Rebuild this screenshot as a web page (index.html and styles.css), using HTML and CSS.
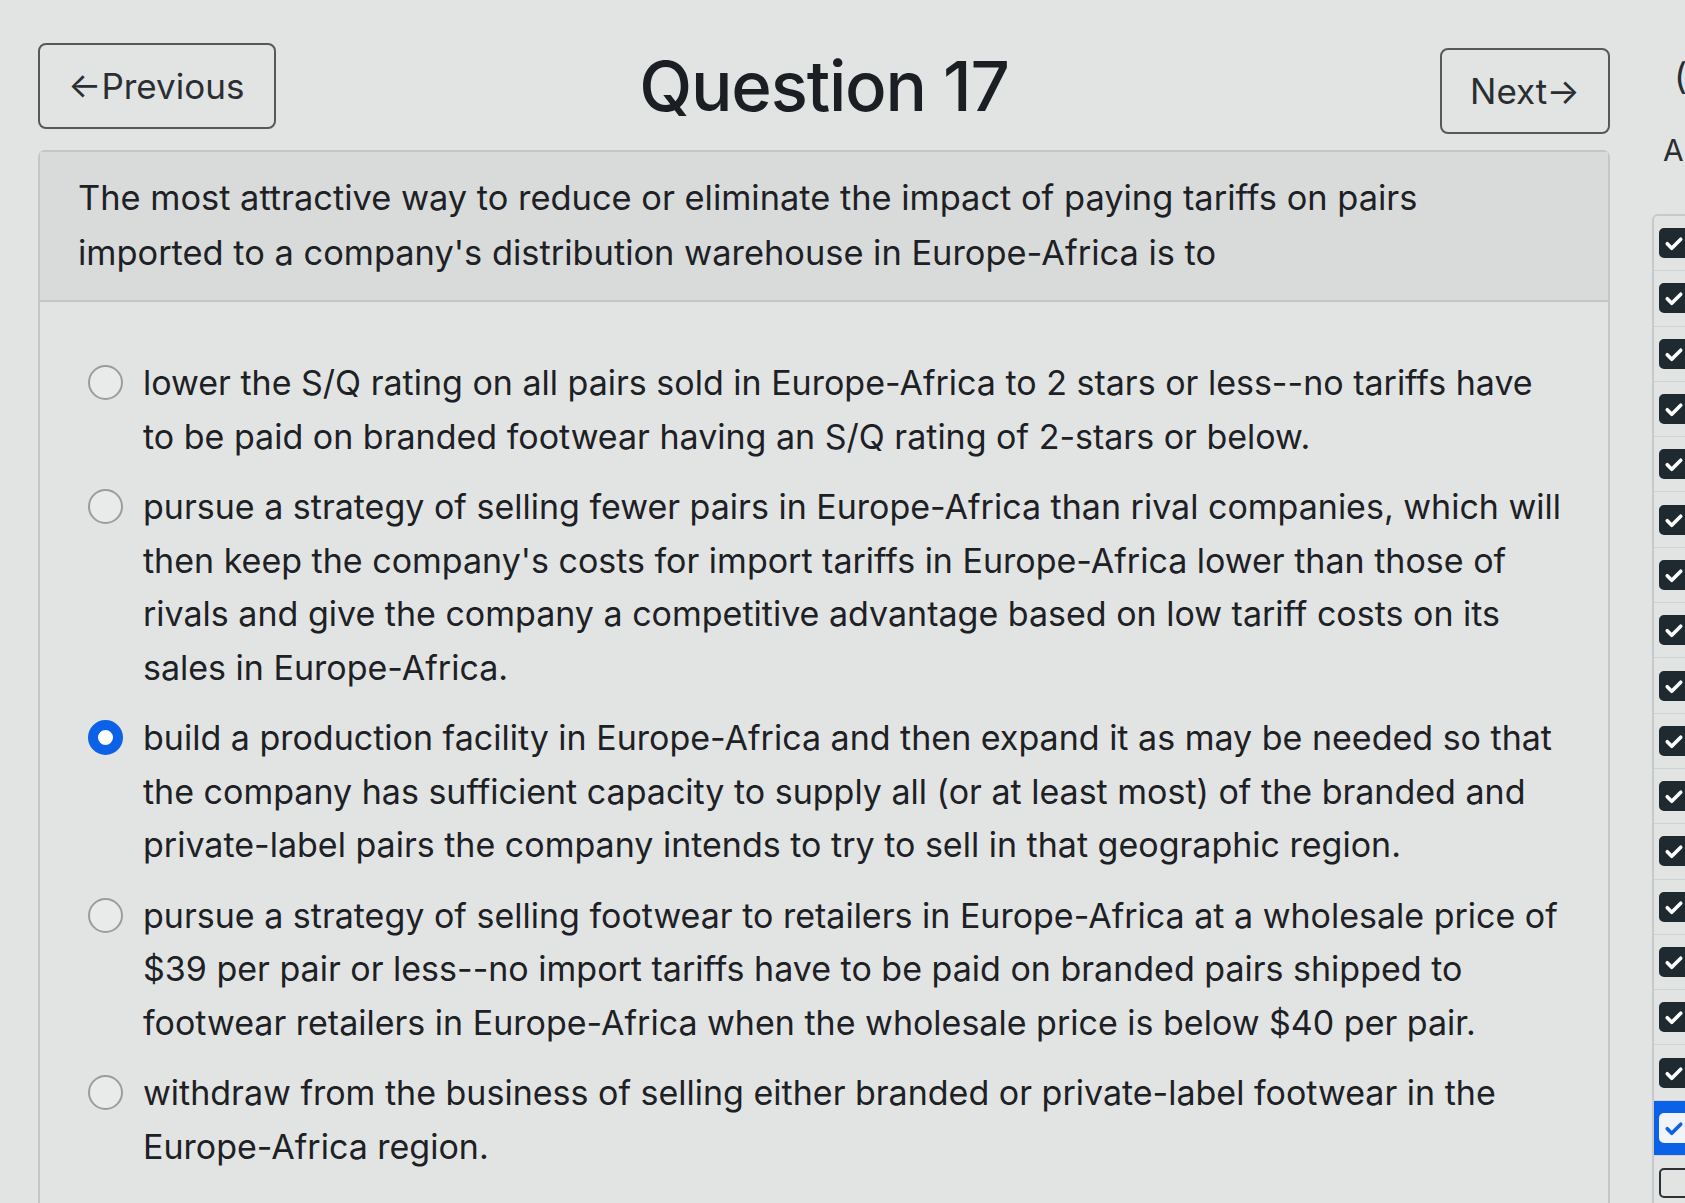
FILE: index.html
```html
<!DOCTYPE html>
<html>
  <head>
    <title>Question 17</title>
    <link rel="stylesheet" href="styles.css">
  </head>
  <body>
    <div class="page">
      <main class="main">
        <div class="topbar">
          <button class="nav-btn prev">&larr;Previous</button>
          <h1 class="title">Question 17</h1>
          <button class="nav-btn next">Next&rarr;</button>
        </div>

        <div class="card">
          <div class="card-header">
            The most attractive way to reduce or eliminate the impact of paying tariffs on pairs
            imported to a company's distribution warehouse in Europe-Africa is to
          </div>
          <div class="card-body">
            <label class="option">
              <input type="radio" name="q17" />
              <span>lower the S/Q rating on all pairs sold in Europe-Africa to 2 stars or less--no tariffs have to be paid on branded footwear having an S/Q rating of 2-stars or below.</span>
            </label>
            <label class="option">
              <input type="radio" name="q17" />
              <span>pursue a strategy of selling fewer pairs in Europe-Africa than rival companies, which will then keep the company's costs for import tariffs in Europe-Africa lower than those of rivals and give the company a competitive advantage based on low tariff costs on its sales in Europe-Africa.</span>
            </label>
            <label class="option">
              <input type="radio" name="q17" checked />
              <span>build a production facility in Europe-Africa and then expand it as may be needed so that the company has sufficient capacity to supply all (or at least most) of the branded and private-label pairs the company intends to try to sell in that geographic region.</span>
            </label>
            <label class="option">
              <input type="radio" name="q17" />
              <span>pursue a strategy of selling footwear to retailers in Europe-Africa at a wholesale price of $39 per pair or less--no import tariffs have to be paid on branded pairs shipped to footwear retailers in Europe-Africa when the wholesale price is below $40 per pair.</span>
            </label>
            <label class="option">
              <input type="radio" name="q17" />
              <span>withdraw from the business of selling either branded or private-label footwear in the Europe-Africa region.</span>
            </label>
          </div>
        </div>
      </main>

      <aside class="sidebar">
        <div class="side-title">(17/18)</div>
        <div class="side-label">Answered</div>
        <ul class="qlist">
          <li><span class="box done"><svg viewBox="0 0 16 16"><path d="M3.5 8.5l3 3 6-6" /></svg></span></li>
          <li><span class="box done"><svg viewBox="0 0 16 16"><path d="M3.5 8.5l3 3 6-6" /></svg></span></li>
          <li><span class="box done"><svg viewBox="0 0 16 16"><path d="M3.5 8.5l3 3 6-6" /></svg></span></li>
          <li><span class="box done"><svg viewBox="0 0 16 16"><path d="M3.5 8.5l3 3 6-6" /></svg></span></li>
          <li><span class="box done"><svg viewBox="0 0 16 16"><path d="M3.5 8.5l3 3 6-6" /></svg></span></li>
          <li><span class="box done"><svg viewBox="0 0 16 16"><path d="M3.5 8.5l3 3 6-6" /></svg></span></li>
          <li><span class="box done"><svg viewBox="0 0 16 16"><path d="M3.5 8.5l3 3 6-6" /></svg></span></li>
          <li><span class="box done"><svg viewBox="0 0 16 16"><path d="M3.5 8.5l3 3 6-6" /></svg></span></li>
          <li><span class="box done"><svg viewBox="0 0 16 16"><path d="M3.5 8.5l3 3 6-6" /></svg></span></li>
          <li><span class="box done"><svg viewBox="0 0 16 16"><path d="M3.5 8.5l3 3 6-6" /></svg></span></li>
          <li><span class="box done"><svg viewBox="0 0 16 16"><path d="M3.5 8.5l3 3 6-6" /></svg></span></li>
          <li><span class="box done"><svg viewBox="0 0 16 16"><path d="M3.5 8.5l3 3 6-6" /></svg></span></li>
          <li><span class="box done"><svg viewBox="0 0 16 16"><path d="M3.5 8.5l3 3 6-6" /></svg></span></li>
          <li><span class="box done"><svg viewBox="0 0 16 16"><path d="M3.5 8.5l3 3 6-6" /></svg></span></li>
          <li><span class="box done"><svg viewBox="0 0 16 16"><path d="M3.5 8.5l3 3 6-6" /></svg></span></li>
          <li><span class="box done"><svg viewBox="0 0 16 16"><path d="M3.5 8.5l3 3 6-6" /></svg></span></li>
          <li class="current"><span class="box done"><svg viewBox="0 0 16 16"><path d="M3.5 8.5l3 3 6-6" /></svg></span></li>
          <li><span class="box"></span></li>
        </ul>
      </aside>
    </div>
  </body>
</html>
```

FILE: styles.css
```css
html, body {
  margin: 0;
  height: 100%;
  overflow: hidden;
}
body {
  font-family: Inter, "Liberation Sans", Arial, sans-serif;
  background-color: #e2e4e3;
  color: #1d2125;
}
.page {
  display: grid;
  grid-template-columns: 1572px 1fr;
  column-gap: 42px;
  padding-left: 38px;
}
.main {
  padding-top: 38px;
}
.topbar {
  display: grid;
  grid-template-columns: 1fr auto 1fr;
  align-items: center;
  height: 92px;
}
.title {
  margin: 0;
  font-weight: 500;
  font-size: 69px;
  letter-spacing: -1.2px;
  color: #1b1f23;
}
.nav-btn {
  font-family: Inter, "Liberation Sans", Arial, sans-serif;
  font-size: 35px;
  color: #2a2e32;
  background: transparent;
  border: 2px solid #55595c;
  border-radius: 8px;
  height: 86px;
  cursor: pointer;
}
.prev {
  justify-self: start;
  padding: 0 30px 0 28px;
}
.next {
  justify-self: end;
  padding: 0 28px;
  margin-top: 10px;
}
.card {
  margin-top: 20px;
  border: 2px solid #c3c6c6;
  border-bottom: none;
  border-radius: 7px 7px 0 0;
}
.card-header {
  background-color: #d9dbda;
  border-bottom: 2px solid #c3c6c6;
  padding: 18px 150px 20px 38px;
  font-size: 34.4px;
  line-height: 55px;
}
.card-body {
  padding: 54px 36px 40px 48px;
}
.option {
  display: flex;
  align-items: flex-start;
  gap: 20px;
  margin-bottom: 17px;
  font-size: 34px;
  line-height: 53.5px;
  cursor: pointer;
}
.option input {
  appearance: none;
  flex: none;
  width: 35px;
  height: 35px;
  margin: 9px 0 0;
  border: 2px solid #9a9d9f;
  border-radius: 50%;
  background-color: #e9ebea;
}
.option input:checked {
  border: 10px solid #0b62e6;
  background-color: #fff;
}
.sidebar {
  padding-top: 56px;
  white-space: nowrap;
}
.side-title {
  font-size: 36px;
  padding-left: 22px;
  height: 76px;
  color: #2a2e32;
}
.side-label {
  font-size: 30px;
  padding-left: 11px;
  height: 82px;
  color: #2a2e32;
}
.qlist {
  list-style: none;
  margin: 0;
  padding: 0;
  border-left: 2px solid #c6c9c9;
  border-top: 2px solid #c6c9c9;
  border-radius: 6px 0 0 0;
}
.qlist li {
  height: 54.3px;
  display: flex;
  align-items: center;
  padding-left: 5px;
  border-bottom: 1px solid #cfd2d2;
}
.qlist li.current {
  background-color: #0b62e6;
}
.box {
  width: 30px;
  height: 30px;
  box-sizing: border-box;
  border: 2px solid #2b3135;
  border-radius: 5px;
  display: flex;
  align-items: center;
  justify-content: center;
}
.box.done {
  background-color: #1f2a30;
  border-color: #1f2a30;
}
.box svg {
  width: 24px;
  height: 24px;
  fill: none;
  stroke: #fff;
  stroke-width: 2.4;
  stroke-linecap: round;
  stroke-linejoin: round;
}
.current .box.done {
  background-color: #f1f4fb;
  border-color: #f1f4fb;
}
.current .box svg {
  stroke: #0b62e6;
}
```
